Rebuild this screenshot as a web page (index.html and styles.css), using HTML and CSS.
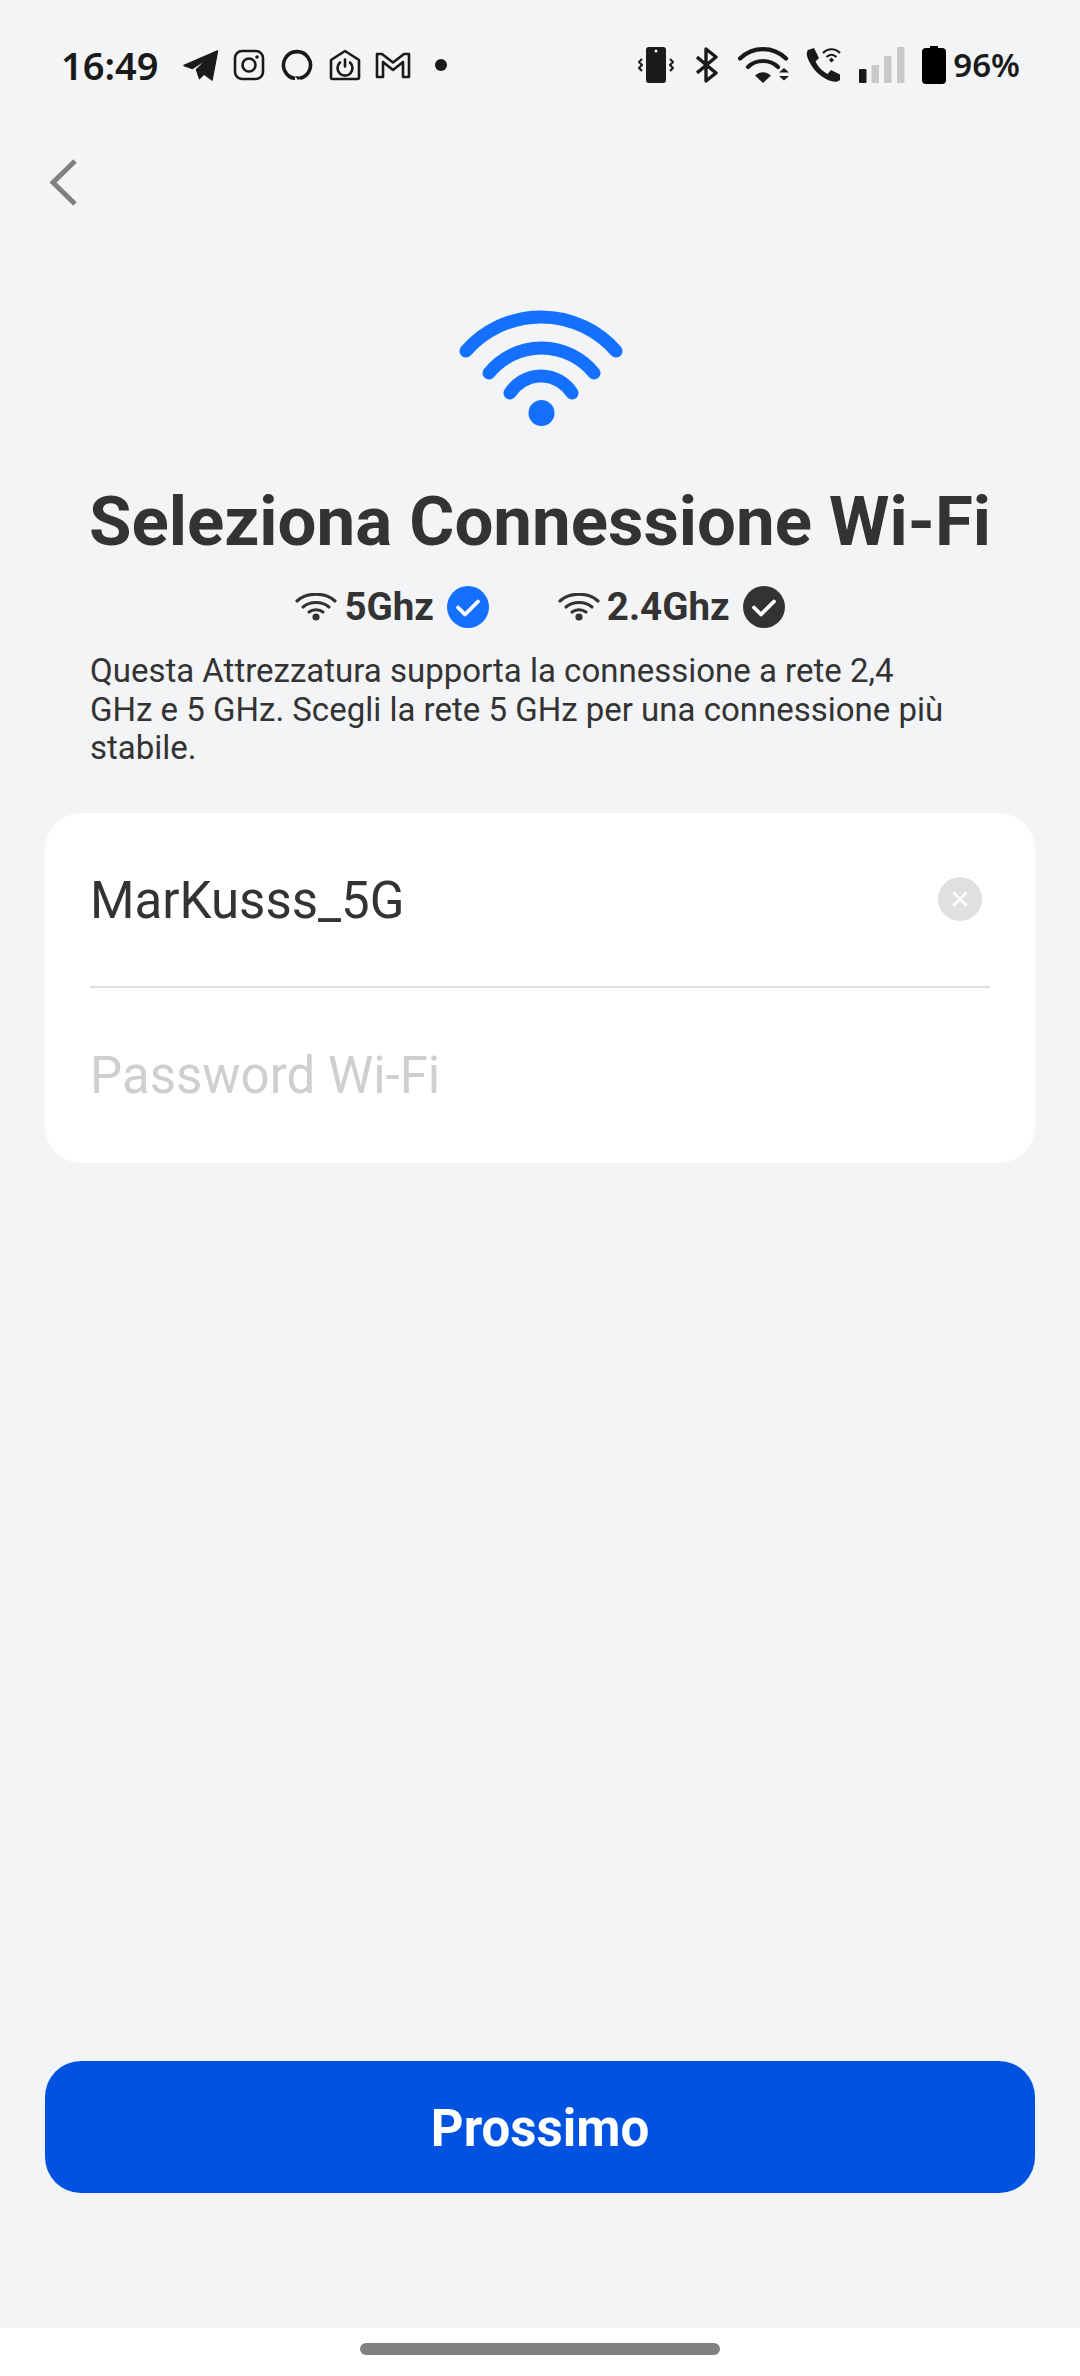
FILE: index.html
```html
<!DOCTYPE html>
<html lang="it">
<head>
<meta charset="utf-8">
<title>Seleziona Connessione Wi-Fi</title>
<link rel="stylesheet" href="styles.css">
</head>
<body>
<div class="screen">
  <main class="main">
    <header class="status">
      <div class="status-left">
        <span class="time">16:49</span>
        <div class="notif">
          <span class="slot"><svg width="36" height="32" viewBox="0 0 36 32"><path d="M1 16.500 34.500 2 29 31 21 25 16.500 29.500 13.500 20.500 26 8.500 9.500 19.500Z" fill="#1a1a1a" stroke="#1a1a1a" stroke-width="1.500" stroke-linejoin="round"/></svg></span>
          <span class="slot"><svg width="32" height="32" viewBox="0 0 32 32" fill="none" stroke="#1a1a1a" stroke-width="2.600"><rect x="2" y="2" width="28" height="28" rx="7"/><circle cx="16" cy="16" r="6.500"/><circle cx="24" cy="8" r="1.800" fill="#1a1a1a" stroke="none"/></svg></span>
          <span class="slot"><svg width="32" height="32" viewBox="0 0 32 32" fill="none"><path d="M14 29.500A13.500 13.500 0 1 1 19 29.300" stroke="#1a1a1a" stroke-width="3.600"/><path d="M14 27 17 31 22 28Z" fill="#1a1a1a"/></svg></span>
          <span class="slot"><svg width="32" height="32" viewBox="0 0 32 32" fill="none" stroke="#1a1a1a" stroke-width="2.600" stroke-linejoin="round" stroke-linecap="round"><path d="M2 11 16 2 30 11V28.500A1.500 1.500 0 0 1 28.500 30H3.500A1.500 1.500 0 0 1 2 28.500Z"/><path d="M11 13.500A7.500 7.500 0 1 0 21 13.500M16 10.500V17.500"/></svg></span>
          <span class="slot"><svg width="36" height="28" viewBox="0 0 36 28" fill="none" stroke="#1a1a1a" stroke-width="2.600" stroke-linejoin="round"><path d="M2 3H7L18 11.500 29 3H34V26H28V11L18 19 8 11V26H2Z"/></svg></span>
          <span class="slot"><span class="dot"></span></span>
        </div>
      </div>
      <div class="status-right">
        <svg class="si-vib" width="36" height="36" viewBox="0 0 36 36"><rect x="8" y="0" width="20" height="36" rx="3" fill="#1a1a1a"/><circle cx="18" cy="4" r="1.500" fill="#f3f4f6"/><path d="M4 12 1 15 4 18 1 21 4 24M32 12 35 15 32 18 35 21 32 24" fill="none" stroke="#1a1a1a" stroke-width="2"/></svg>
        <svg class="si-bt" width="22" height="36" viewBox="0 0 22 36" fill="none" stroke="#1a1a1a" stroke-width="3.400" stroke-linejoin="round"><path d="M1 10 20 26 10 34V2L20 10 1 26"/></svg>
        <svg class="si-wifi" width="52" height="36" viewBox="0 0 52 36"><g fill="none" stroke="#1a1a1a" stroke-width="4.200" stroke-linecap="round"><path d="M2 11.500C15 -1 35 -1 48 11.500"/><path d="M10 20C18 12 32 12 40 20"/></g><path d="M17 28.500C22 24 28 24 33 28.500L25 36Z" fill="#1a1a1a"/><path d="M41 25.500 46 21 51 25.500ZM41 29 51 29 46 33.500Z" fill="#1a1a1a"/></svg>
        <svg class="si-call" width="36" height="36" viewBox="0 0 36 36"><path d="M2 3 8 1 13 11 9.500 14.500C12 20 16 24 21.500 27L25 23 34 27.500 34 33C31 36 26 35 20 32 11 27 4 19 1 9 0.500 6 1 4 2 3Z" fill="#1a1a1a"/><g fill="none" stroke="#1a1a1a" stroke-width="2.200"><path d="M17 6C22 1 29 1 34 6"/><path d="M20.500 10C23.500 7 27.500 7 30.500 10"/></g><path d="M23 13 25.500 10.500 28 13 25.500 15.500Z" fill="#1a1a1a"/></svg>
        <svg class="si-sig" width="46" height="36" viewBox="0 0 46 36"><rect x="0" y="22" width="7.500" height="14" rx="1" fill="#1a1a1a"/><rect x="12.500" y="18" width="7.500" height="18" rx="1" fill="#c8c8c8"/><rect x="25" y="9" width="7.500" height="27" rx="1" fill="#c8c8c8"/><rect x="38" y="0" width="7.500" height="36" rx="1" fill="#c8c8c8"/></svg>
        <svg class="si-bat" width="24" height="38" viewBox="0 0 24 38"><path d="M8 0H16V2H20A4 4 0 0 1 24 6V34A4 4 0 0 1 20 38H4A4 4 0 0 1 0 34V6A4 4 0 0 1 4 2H8Z" fill="#000"/></svg>
        <span class="pct">96%</span>
      </div>
    </header>

    <button class="back" type="button" aria-label="Indietro">
      <svg width="32" height="50" viewBox="0 0 32 50" fill="none" stroke="#808080" stroke-width="5"><path d="M28 3 6 24.500 28 46"/></svg>
    </button>

    <div class="hero">
      <svg width="180" height="124" viewBox="0 0 180 124" fill="none" stroke="#1470ff" stroke-width="13" stroke-linecap="round">
        <path d="M15 47A99.700 99.700 0 0 1 165 47"/>
        <path d="M38 69A67.600 67.600 0 0 1 143 69"/>
        <path d="M59 89A36.800 36.800 0 0 1 121 89"/>
        <circle cx="90.500" cy="109" r="13" fill="#1470ff" stroke="none"/>
      </svg>
    </div>

    <h1 class="title">Seleziona Connessione Wi-Fi</h1>

    <div class="bands">
      <div class="band">
        <svg class="mini" width="42" height="28" viewBox="0 0 42 28" fill="none" stroke="#333" stroke-width="3.100" stroke-linecap="round"><path d="M2 8C12 -1 30 -1 40 8"/><path d="M8 14C15 8 27 8 34 14"/><path d="M14 19C18 16 24 16 28 19"/><circle cx="21" cy="24" r="3.600" fill="#333" stroke="none"/></svg>
        <span class="band-label">5Ghz</span>
        <svg class="tick" width="42" height="42" viewBox="0 0 42 42"><circle cx="21" cy="21" r="21" fill="#1470ff"/><path d="M11 21.500 18 28.500 31 15.500" fill="none" stroke="#fff" stroke-width="3.800" stroke-linecap="round" stroke-linejoin="round"/></svg>
      </div>
      <div class="band">
        <svg class="mini" width="42" height="28" viewBox="0 0 42 28" fill="none" stroke="#333" stroke-width="3.100" stroke-linecap="round"><path d="M2 8C12 -1 30 -1 40 8"/><path d="M8 14C15 8 27 8 34 14"/><path d="M14 19C18 16 24 16 28 19"/><circle cx="21" cy="24" r="3.600" fill="#333" stroke="none"/></svg>
        <span class="band-label">2.4Ghz</span>
        <svg class="tick" width="42" height="42" viewBox="0 0 42 42"><circle cx="21" cy="21" r="21" fill="#333"/><path d="M11 21.500 18 28.500 31 15.500" fill="none" stroke="#fff" stroke-width="3.800" stroke-linecap="round" stroke-linejoin="round"/></svg>
      </div>
    </div>

    <p class="desc">Questa Attrezzatura supporta la connessione a rete 2,4<br>GHz e 5 GHz. Scegli la rete 5 GHz per una connessione più<br>stabile.</p>

    <section class="card">
      <div class="row row-ssid">
        <span class="ssid">MarKusss_5G</span>
        <svg class="clear" width="44" height="44" viewBox="0 0 44 44"><circle cx="22" cy="22" r="22" fill="#e0e0e0"/><path d="M16 16 28 28M28 16 16 28" stroke="#fff" stroke-width="2.600" stroke-linecap="round"/></svg>
      </div>
      <div class="row row-pass">
        <span class="placeholder">Password Wi-Fi</span>
      </div>
    </section>

    <button class="next" type="button"><span class="next-label">Prossimo</span></button>
  </main>
  <footer class="navbar"><span class="pill"></span></footer>
</div>
</body>
</html>
```

FILE: styles.css
```css
* { box-sizing: border-box; }
html, body { margin: 0; padding: 0; }
body { width: 1080px; height: 2376px; overflow: hidden; font-family: Roboto, "Liberation Sans", sans-serif; color: #333; background: #fff; }
.screen { height: 2376px; display: flex; flex-direction: column; }
.main { flex: 1; background: #f3f4f6; display: flex; flex-direction: column; }

.status { height: 130px; padding: 44px 60px 0 61px; display: flex; justify-content: space-between; align-items: flex-start; }
.status-left { display: flex; align-items: center; height: 42px; }
.time { width: 116px; font-family: "Noto Sans", sans-serif; font-weight: 600; font-size: 38px; line-height: 42px; color: #1a1a1a; }
.notif { display: flex; }
.slot { width: 48px; height: 42px; display: flex; align-items: center; justify-content: center; }
.dot { width: 12px; height: 12px; border-radius: 50%; background: #1a1a1a; }
.status-right { display: flex; align-items: center; height: 42px; }
.si-bt { margin-left: 22px; }
.si-wifi { margin-left: 20px; }
.si-call { margin-left: 16px; }
.si-sig { margin-left: 17px; }
.si-bat { margin-left: 17px; }
.pct { margin-left: 7px; font-family: "Noto Sans", sans-serif; font-weight: 600; font-size: 33px; line-height: 42px; color: #1a1a1a; }

.back { display: block; width: 32px; height: 50px; margin: 28px 0 0 47px; padding: 0; border: 0; background: none; }
.hero { margin-top: 96px; padding-left: 2px; display: flex; justify-content: center; }
.title { margin: 54px 0 0; text-align: center; font-size: 69px; line-height: 80px; font-weight: 700; color: #333; }
.bands { margin-top: 24px; display: flex; justify-content: center; gap: 69px; height: 42px; }
.band { display: flex; align-items: center; }
.band-label { margin: 0 13px 0 7px; font-size: 38.500px; font-weight: 700; line-height: 42px; }
.desc { margin: 24px 0 0; padding-left: 90px; font-size: 33px; line-height: 38.500px; color: #333; }

.card { margin: 45px 45px 0; height: 350px; background: #fff; border-radius: 36px; padding: 0 45px; }
.row { display: flex; align-items: center; justify-content: space-between; }
.row-ssid { height: 175px; border-bottom: 2px solid #e0e0e0; padding-right: 8px; }
.row-pass { height: 175px; }
.ssid { font-size: 51px; line-height: 60px; color: #333; padding-top: 3px; }
.placeholder { font-size: 51px; line-height: 60px; color: #cfcfcf; padding-top: 2px; }

.next { margin: auto 45px 135px; height: 132px; border: 0; border-radius: 36px; background: #0052e0; color: #fff; font-family: Roboto, sans-serif; font-size: 51px; font-weight: 700; }
.next-label { display: block; padding-top: 3px; }

.navbar { height: 48px; background: #fff; display: flex; justify-content: center; padding-top: 15px; }
.pill { width: 360px; height: 12px; border-radius: 6px; background: #808080; }
```
